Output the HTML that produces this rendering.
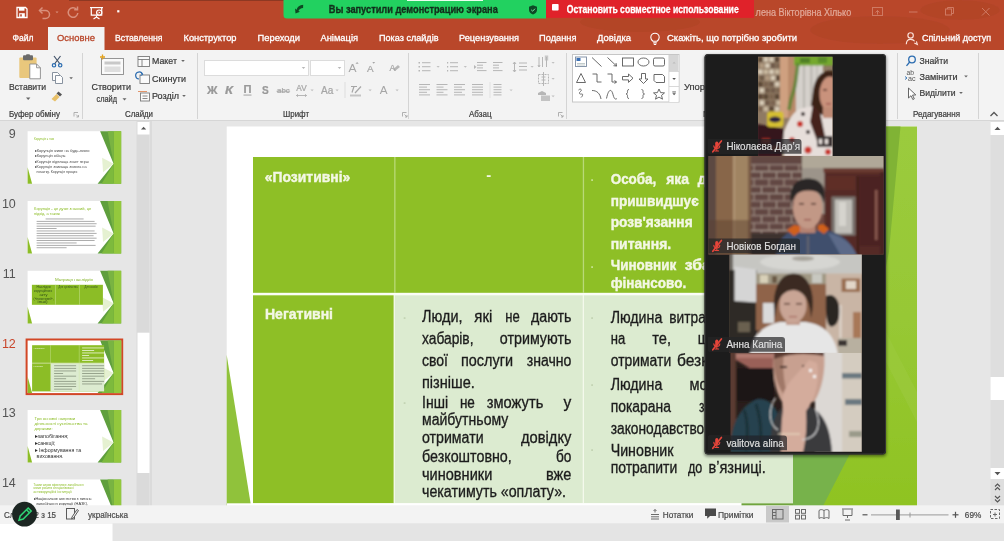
<!DOCTYPE html>
<html lang="uk"><head><meta charset="utf-8"><title>PowerPoint</title>
<style>
html,body{margin:0;padding:0;background:#e6e6e6;overflow:hidden}
svg{display:block;font-family:"Liberation Sans",sans-serif}
text{white-space:pre}
</style></head><body>
<svg width="1004" height="541" viewBox="0 0 1004 541">
<defs><filter id="soft" x="-2%" y="-2%" width="104%" height="104%"><feGaussianBlur stdDeviation="0.42"/></filter></defs>
<g filter="url(#soft)">
<rect x="-6" y="-6" width="1016" height="553" fill="#e6e6e6" />
<rect x="-6" y="-6" width="1016" height="56" fill="#b9472b" />
<g opacity="0.06" fill="#5a1a08"><ellipse cx="640" cy="22" rx="60" ry="10"/><ellipse cx="880" cy="30" rx="70" ry="14"/><ellipse cx="960" cy="10" rx="40" ry="10"/></g>
<rect x="69" y="0" width="215" height="0.9" fill="#8a3621" />
<rect x="-6" y="50" width="1016" height="70" fill="#f3f3f3" />
<rect x="-6" y="120" width="1016" height="1" fill="#d6d6d6" />
<rect x="48" y="27" width="56.5" height="24" fill="#f3f3f3" />
<g fill="none" stroke="#ffffff" stroke-width="1.3"><path d="M17 7.5h8.5l1.5 1.5v8.5h-10z"/></g>
<rect x="19" y="7.5" width="5.5" height="3.2" fill="#ffffff" />
<rect x="19.2" y="13.2" width="5.6" height="4.3" fill="#ffffff" />
<rect x="20.2" y="14.3" width="1.6" height="2.2" fill="#b9472b" />
<g fill="none" stroke="#d9907c" stroke-width="1.5"><path d="M40 10.5h5.5a4 4 0 0 1 0 8h-3"/><path d="M42.5 7.5l-3 3 3 3"/></g>
<path d="M55.5 11.5h3l-1.5 1.8z" fill="#d9907c" />
<g fill="none" stroke="#d9907c" stroke-width="1.5"><path d="M76.5 9.2a4.8 4.8 0 1 0 1.3 3.8"/><path d="M77.5 6.5v3.3h-3.3"/></g>
<g fill="none" stroke="#ffffff" stroke-width="1.2"><path d="M90 7.6h13"/><path d="M91.3 8v7.2h10.4V8"/><path d="M96.5 15.4v2M93.5 19l3-2 3 2"/><circle cx="99.2" cy="12.6" r="2.6" fill="#b9472b"/><path d="M98.6 11.4l1.8 1.2-1.8 1.2z" fill="#ffffff" stroke="none"/></g>
<rect x="117.2" y="10.2" width="2.2" height="2.2" fill="#ffffff" />
<path d="M116.5 14h3.6l-1.8 0z" fill="#ffffff" />
<path d="M283.5 -6H546V18.4H287a3.5 3.5 0 0 1-3.5-3.5z" fill="#23d160"/>
<rect x="407" y="0" width="76" height="1" fill="#e8fff0" />
<path d="M303.200 4.800c-3.600 .2-6 2.200-6.600 5l-1.600-1.200 .5 4.800 4.500-1.600-1.500-.9c.7-1.700 2.200-2.700 4.600-2.900z" fill="#0f4a24" />
<text x="328.8" y="12.9" font-size="10" fill="#12301c" textLength="169" lengthAdjust="spacingAndGlyphs" font-weight="bold" stroke="#12301c" stroke-width="0.35">Вы запустили демонстрацию экрана</text>
<path d="M533 5.300l4 1.500v3.300c0 2.200-1.700 3.600-4 4.400-2.300-.8-4-2.200-4-4.400v-3.300z" fill="#0e4a26" />
<path d="M531.200 9.800l1.400 1.400 2.400-2.500" fill="none" stroke="#7fe8a6" stroke-width="1" />
<rect x="546" y="-6" width="208" height="23.9" fill="#e0232a" />
<rect x="552" y="4" width="6.6" height="6.6" fill="#ffffff" rx="0.8"/>
<text x="566.7" y="12.9" font-size="10" fill="#ffffff" textLength="172" lengthAdjust="spacingAndGlyphs" font-weight="bold" stroke="#ffffff" stroke-width="0.3">Остановить совместное использование</text>
<text x="755.6" y="15.7" font-size="10" fill="#e2a999" textLength="95.6" lengthAdjust="spacingAndGlyphs" stroke="#e2a999" stroke-width="0.22" >лена Вікторівна Хілько</text>
<g fill="none" stroke="#cf7a63" stroke-width="1"><rect x="872.500" y="7.500" width="10" height="8"/><path d="M875.500 12.500l2-2 2 2M877.500 10.500v4"/><path d="M909 12h8.500"/><rect x="945.500" y="9" width="6" height="6"/><path d="M947.500 9V7.500h6v6H951.500"/><path d="M982 8l7.500 7.500M989.500 8L982 15.500"/></g>
<text x="12.5" y="41.3" font-size="9.4" fill="#ffffff" textLength="21" lengthAdjust="spacingAndGlyphs" stroke="#ffffff" stroke-width="0.3">Файл</text>
<text x="57" y="41.3" font-size="9.4" fill="#b9472b" textLength="38" lengthAdjust="spacingAndGlyphs" stroke="#b9472b" stroke-width="0.3">Основне</text>
<text x="115" y="41.3" font-size="9.4" fill="#ffffff" textLength="47.5" lengthAdjust="spacingAndGlyphs" stroke="#ffffff" stroke-width="0.3">Вставлення</text>
<text x="183.5" y="41.3" font-size="9.4" fill="#ffffff" textLength="53" lengthAdjust="spacingAndGlyphs" stroke="#ffffff" stroke-width="0.3">Конструктор</text>
<text x="257.5" y="41.3" font-size="9.4" fill="#ffffff" textLength="42.5" lengthAdjust="spacingAndGlyphs" stroke="#ffffff" stroke-width="0.3">Переходи</text>
<text x="320.5" y="41.3" font-size="9.4" fill="#ffffff" textLength="37.5" lengthAdjust="spacingAndGlyphs" stroke="#ffffff" stroke-width="0.3">Анімація</text>
<text x="379" y="41.3" font-size="9.4" fill="#ffffff" textLength="59.5" lengthAdjust="spacingAndGlyphs" stroke="#ffffff" stroke-width="0.3">Показ слайдів</text>
<text x="459" y="41.3" font-size="9.4" fill="#ffffff" textLength="60" lengthAdjust="spacingAndGlyphs" stroke="#ffffff" stroke-width="0.3">Рецензування</text>
<text x="539" y="41.3" font-size="9.4" fill="#ffffff" textLength="37.5" lengthAdjust="spacingAndGlyphs" stroke="#ffffff" stroke-width="0.3">Подання</text>
<text x="597" y="41.3" font-size="9.4" fill="#ffffff" textLength="34" lengthAdjust="spacingAndGlyphs" stroke="#ffffff" stroke-width="0.3">Довідка</text>
<text x="667" y="41.3" font-size="9.4" fill="#ffffff" textLength="130" lengthAdjust="spacingAndGlyphs" stroke="#ffffff" stroke-width="0.3">Скажіть, що потрібно зробити</text>
<text x="922" y="41.3" font-size="9.4" fill="#ffffff" textLength="69" lengthAdjust="spacingAndGlyphs" stroke="#ffffff" stroke-width="0.3">Спільний доступ</text>
<g fill="none" stroke="#ffffff" stroke-width="1.1"><path d="M653 41.200c-1.500-1.200-2.200-2.400-2.200-3.800a4.200 4.200 0 0 1 8.400 0c0 1.400-.7 2.600-2.200 3.800z"/><path d="M653.200 42.900h3.600M653.800 44.500h2.400"/></g>
<g fill="none" stroke="#fbe3da" stroke-width="1.15"><circle cx="910.600" cy="35.400" r="2.700"/><path d="M906.300 44.300c0-3.300 2-5 4.300-5s3.300 .9 4 2"/><path d="M914.300 43l3 1.400-.9-3"/></g>
<rect x="82" y="53" width="1" height="66" fill="#d4d4d4" />
<rect x="197" y="53" width="1" height="66" fill="#d4d4d4" />
<rect x="408" y="53" width="1" height="66" fill="#d4d4d4" />
<rect x="566" y="53" width="1" height="66" fill="#d4d4d4" />
<rect x="897" y="53" width="1" height="66" fill="#d4d4d4" />
<rect x="978" y="53" width="1" height="66" fill="#d4d4d4" />
<text x="9" y="117.4" font-size="9.2" fill="#3c3c3c" textLength="51" lengthAdjust="spacingAndGlyphs" stroke="#3c3c3c" stroke-width="0.22" >Буфер обміну</text>
<text x="125" y="117.4" font-size="9.2" fill="#3c3c3c" textLength="28" lengthAdjust="spacingAndGlyphs" stroke="#3c3c3c" stroke-width="0.22" >Слайди</text>
<text x="283" y="117.4" font-size="9.2" fill="#3c3c3c" textLength="26" lengthAdjust="spacingAndGlyphs" stroke="#3c3c3c" stroke-width="0.22" >Шрифт</text>
<text x="469" y="117.4" font-size="9.2" fill="#3c3c3c" textLength="22.5" lengthAdjust="spacingAndGlyphs" stroke="#3c3c3c" stroke-width="0.22" >Абзац</text>
<text x="913" y="117.4" font-size="9.2" fill="#3c3c3c" textLength="47" lengthAdjust="spacingAndGlyphs" stroke="#3c3c3c" stroke-width="0.22" >Редагування</text>
<text x="703" y="117.4" font-size="9.2" fill="#3c3c3c" stroke="#3c3c3c" stroke-width="0.22" >М</text>
<g fill="none" stroke="#a8a8a8" stroke-width="0.9"><path d="M74 112.5h-0 M74 116.500v-4h4"/><path d="M76 114.500l2.500 2.500M78.5 115v2h-2"/></g>
<g fill="none" stroke="#a8a8a8" stroke-width="0.9"><path d="M402.5 112.5h-0 M402.5 116.500v-4h4"/><path d="M404.5 114.500l2.500 2.500M407.0 115v2h-2"/></g>
<g fill="none" stroke="#a8a8a8" stroke-width="0.9"><path d="M558.5 112.5h-0 M558.5 116.500v-4h4"/><path d="M560.5 114.500l2.500 2.500M563.0 115v2h-2"/></g>
<g><rect x="19.300" y="57.500" width="17.300" height="20.500" rx="1" fill="#e9c77b"/><rect x="23" y="55.300" width="10" height="5" rx="1" fill="#6b6b6b"/><rect x="26" y="54.300" width="4" height="2.500" rx="1" fill="#6b6b6b"/><path d="M29.800 64h6.800l3.800 3.800v11h-10.600z" fill="#ffffff" stroke="#8a8a8a" stroke-width="0.9"/><path d="M36.600 64v3.800h3.800" fill="none" stroke="#8a8a8a" stroke-width="0.9"/></g>
<text x="9" y="89.9" font-size="9.8" fill="#3a3a3a" textLength="37" lengthAdjust="spacingAndGlyphs" stroke="#3a3a3a" stroke-width="0.22" >Вставити</text>
<path d="M26 97.500h4.400l-2.200 2.400z" fill="#666" />
<g fill="none" stroke="#44546a" stroke-width="1.2"><path d="M54 56l6 8M60.500 56l-6 8"/><circle cx="54" cy="65.300" r="1.700" stroke="#2b6cb0"/><circle cx="60.200" cy="65.300" r="1.700" stroke="#2b6cb0"/></g>
<g fill="#fdfdfd" stroke="#7a8694" stroke-width="0.9"><path d="M52.500 72.500h5l2 2v6h-7z"/><path d="M55.500 75.500h5l2 2v6h-7z"/></g>
<path d="M69.300 77.300h3.600l-1.800 2z" fill="#666" />
<g><path d="M58.500 91.500l3.500 3-2 2-3.500-3z" fill="#555"/><path d="M56.500 94l3 3-4.500 4.500-3.500-2.500z" fill="#e8c068"/></g>
<g><rect x="101.500" y="58.500" width="22" height="16" fill="#fafafa" stroke="#8a8a8a" stroke-width="0.9"/><rect x="104.500" y="61.500" width="16" height="3" fill="#c8c8c8"/><rect x="104.500" y="66.500" width="16" height="5.500" fill="#dedede"/><path d="M102.500 54.500v5M100 57h5" stroke="#e3a21a" stroke-width="1.300"/></g>
<text x="91.5" y="89.9" font-size="9.8" fill="#3a3a3a" textLength="39.5" lengthAdjust="spacingAndGlyphs" stroke="#3a3a3a" stroke-width="0.22" >Створити</text>
<text x="96.5" y="102.3" font-size="9.8" fill="#3a3a3a" textLength="20.5" lengthAdjust="spacingAndGlyphs" stroke="#3a3a3a" stroke-width="0.22" >слайд</text>
<path d="M122.500 98.300h4l-2 2.200z" fill="#666" />
<g fill="#fafafa" stroke="#7a7a7a" stroke-width="0.9"><rect x="138" y="56.500" width="11.500" height="10"/><path d="M138 59.500h11.500M142 59.500v7" fill="none"/></g>
<text x="152" y="63.9" font-size="9.8" fill="#3a3a3a" textLength="25" lengthAdjust="spacingAndGlyphs" stroke="#3a3a3a" stroke-width="0.22" >Макет</text>
<path d="M181.200 60h3.600l-1.800 2z" fill="#666" />
<g fill="#fafafa" stroke="#7a7a7a" stroke-width="0.9"><rect x="140" y="75" width="9.500" height="8.500"/></g><path d="M142.500 74.500a3.500 3.500 0 1 0-3.500 4.500" fill="none" stroke="#2b6cb0" stroke-width="1.200"/><path d="M141 72.500l1.800 2-2.300 1" fill="none" stroke="#2b6cb0" stroke-width="1"/>
<text x="152" y="81.9" font-size="9.8" fill="#3a3a3a" textLength="34" lengthAdjust="spacingAndGlyphs" stroke="#3a3a3a" stroke-width="0.22" >Скинути</text>
<g fill="#fafafa" stroke="#7a7a7a" stroke-width="0.9"><rect x="140.500" y="93" width="9" height="8"/><path d="M138 91.500h9" stroke="#e08a5a"/><path d="M142.500 96h5M142.500 98.500h5" fill="none"/></g>
<text x="152" y="98.9" font-size="9.8" fill="#3a3a3a" textLength="27" lengthAdjust="spacingAndGlyphs" stroke="#3a3a3a" stroke-width="0.22" >Розділ</text>
<path d="M182.200 95h3.600l-1.800 2z" fill="#666" />
<rect x="204.500" y="60.500" width="104" height="15" fill="#fff" stroke="#dcdcdc" stroke-width="1"/><rect x="310.500" y="60.500" width="34" height="15" fill="#fff" stroke="#dcdcdc" stroke-width="1"/>
<path d="M301.700 67h3.600l-1.800 2z" fill="#b8b8b8" />
<path d="M337.700 67h3.600l-1.800 2z" fill="#b8b8b8" />
<text x="348.5" y="71.6" font-size="10.8" fill="#a6a6a6" textLength="8" lengthAdjust="spacingAndGlyphs" >A</text>
<path d="M355.500 63.800l1.600-1.900 1.600 1.900z" fill="#a6a6a6" />
<text x="367" y="71.6" font-size="9.5" fill="#a6a6a6" textLength="6.6" lengthAdjust="spacingAndGlyphs" stroke="#a6a6a6" stroke-width="0.22" >A</text>
<path d="M372.300 62l1.400 1.700 1.400-1.700z" fill="#a6a6a6" />
<text x="389.5" y="70.5" font-size="9.5" fill="#a6a6a6" textLength="6" lengthAdjust="spacingAndGlyphs" stroke="#a6a6a6" stroke-width="0.22" >A</text>
<path d="M393 69.500l5-4.500 2 2-5 4z" fill="#a6a6a6" opacity="0.8"/>
<text x="207" y="93.8" font-size="10.5" fill="#999" textLength="10.5" lengthAdjust="spacingAndGlyphs" font-weight="bold" stroke="#999" stroke-width="0.22" >Ж</text>
<text x="225" y="93.8" font-size="10.5" fill="#999" textLength="8" lengthAdjust="spacingAndGlyphs" font-weight="bold" stroke="#999" stroke-width="0.22" font-style="italic">К</text>
<text x="243.5" y="93.3" font-size="10.5" fill="#999" textLength="8" lengthAdjust="spacingAndGlyphs" font-weight="bold" stroke="#999" stroke-width="0.22" >П</text>
<rect x="243.5" y="94.6" width="8" height="0.9" fill="#999" />
<text x="262" y="93.8" font-size="10.5" fill="#999" textLength="6.7" lengthAdjust="spacingAndGlyphs" font-weight="bold" stroke="#999" stroke-width="0.22" >S</text>
<text x="277" y="93.4" font-size="8" fill="#a6a6a6" textLength="12.7" lengthAdjust="spacingAndGlyphs" stroke="#a6a6a6" stroke-width="0.22" >abc</text>
<rect x="276.5" y="90.8" width="13.6" height="0.8" fill="#a6a6a6" />
<text x="296.3" y="91.3" font-size="8.5" fill="#a6a6a6" textLength="10.4" lengthAdjust="spacingAndGlyphs" stroke="#a6a6a6" stroke-width="0.22" >AV</text>
<path d="M296.500 95.500h10M296.500 95.500l1.500-1.200M296.500 95.500l1.500 1.200M306.500 95.500l-1.500-1.200M306.500 95.500l-1.500 1.200" stroke="#a6a6a6" stroke-width="0.8" fill="none"/>
<path d="M310.500 89.500h3.200l-1.600 1.800z" fill="#c0c0c0" />
<text x="321" y="93.8" font-size="10" fill="#a6a6a6" textLength="12.3" lengthAdjust="spacingAndGlyphs" stroke="#a6a6a6" stroke-width="0.22" >Aa</text>
<path d="M335.500 89.500h3.200l-1.600 1.800z" fill="#c0c0c0" />
<rect x="344.5" y="82" width="1" height="16" fill="#dedede" />
<g stroke="#a6a6a6" stroke-width="1.200" fill="none"><path d="M351 86.500h6M354 86.500l-2 6"/><path d="M355 93l6-6.500"/><path d="M350 95.500h11" stroke-width="2" stroke="#c4c4c4"/></g>
<path d="M368.500 89.500h3.200l-1.600 1.800z" fill="#c0c0c0" />
<text x="379.7" y="93.8" font-size="10.8" fill="#a6a6a6" textLength="7.8" lengthAdjust="spacingAndGlyphs" >A</text>
<path d="M395.500 89.500h3.200l-1.600 1.800z" fill="#c0c0c0" />
<rect x="418.5" y="62" width="1.5" height="1.5" fill="#b6b6b6" />
<rect x="422" y="62.2" width="8.5" height="1" fill="#b6b6b6" />
<rect x="418.5" y="66" width="1.5" height="1.5" fill="#b6b6b6" />
<rect x="422" y="66.2" width="8.5" height="1" fill="#b6b6b6" />
<rect x="418.5" y="70" width="1.5" height="1.5" fill="#b6b6b6" />
<rect x="422" y="70.2" width="8.5" height="1" fill="#b6b6b6" />
<path d="M436.500 66h3.200l-1.600 1.800z" fill="#c0c0c0" />
<rect x="447" y="62" width="1.2" height="1.5" fill="#b6b6b6" />
<rect x="450" y="62.2" width="8" height="1" fill="#b6b6b6" />
<rect x="447" y="66" width="1.2" height="1.5" fill="#b6b6b6" />
<rect x="450" y="66.2" width="8" height="1" fill="#b6b6b6" />
<rect x="447" y="70" width="1.2" height="1.5" fill="#b6b6b6" />
<rect x="450" y="70.2" width="8" height="1" fill="#b6b6b6" />
<path d="M463.700 66h3.200l-1.600 1.800z" fill="#c0c0c0" />
<rect x="477" y="62.0" width="9.5" height="1" fill="#b6b6b6" />
<rect x="477" y="64.7" width="6" height="1" fill="#b6b6b6" />
<rect x="477" y="67.4" width="6" height="1" fill="#b6b6b6" />
<rect x="477" y="70.1" width="9.5" height="1" fill="#b6b6b6" />
<path d="M474 65l2.500 2-2.500 2z" fill="#b6b6b6" />
<rect x="493" y="62.0" width="9.5" height="1" fill="#b6b6b6" />
<rect x="493" y="64.7" width="6" height="1" fill="#b6b6b6" />
<rect x="493" y="67.4" width="6" height="1" fill="#b6b6b6" />
<rect x="493" y="70.1" width="9.5" height="1" fill="#b6b6b6" />
<rect x="419" y="84.0" width="11" height="1" fill="#b6b6b6" />
<rect x="419" y="86.6" width="8" height="1" fill="#b6b6b6" />
<rect x="419" y="89.2" width="11" height="1" fill="#b6b6b6" />
<rect x="419" y="91.8" width="8" height="1" fill="#b6b6b6" />
<rect x="419" y="94.4" width="11" height="1" fill="#b6b6b6" />
<rect x="436.5" y="84.0" width="11" height="1" fill="#b6b6b6" />
<rect x="436.5" y="86.6" width="7" height="1" fill="#b6b6b6" />
<rect x="436.5" y="89.2" width="11" height="1" fill="#b6b6b6" />
<rect x="436.5" y="91.8" width="7" height="1" fill="#b6b6b6" />
<rect x="436.5" y="94.4" width="11" height="1" fill="#b6b6b6" />
<rect x="454" y="84.0" width="11" height="1" fill="#b6b6b6" />
<rect x="454" y="86.6" width="8" height="1" fill="#b6b6b6" />
<rect x="454" y="89.2" width="11" height="1" fill="#b6b6b6" />
<rect x="454" y="91.8" width="8" height="1" fill="#b6b6b6" />
<rect x="454" y="94.4" width="11" height="1" fill="#b6b6b6" />
<rect x="472" y="84.0" width="11" height="1" fill="#b6b6b6" />
<rect x="472" y="86.6" width="11" height="1" fill="#b6b6b6" />
<rect x="472" y="89.2" width="11" height="1" fill="#b6b6b6" />
<rect x="472" y="91.8" width="11" height="1" fill="#b6b6b6" />
<rect x="472" y="94.4" width="11" height="1" fill="#b6b6b6" />
<rect x="489.5" y="82" width="1" height="16" fill="#e2e2e2" />
<rect x="493.5" y="84.0" width="8" height="1" fill="#b6b6b6" />
<rect x="493.5" y="86.6" width="8" height="1" fill="#b6b6b6" />
<rect x="493.5" y="89.2" width="8" height="1" fill="#b6b6b6" />
<rect x="493.5" y="91.8" width="8" height="1" fill="#b6b6b6" />
<rect x="493.5" y="94.4" width="8" height="1" fill="#b6b6b6" />
<path d="M509.500 89.500h3.200l-1.600 1.800z" fill="#c8c8c8" />
<g stroke="#b6b6b6" stroke-width="1" fill="none"><path d="M514.500 62v10M513 64l1.500-2 1.500 2M513 70l1.500 2 1.500-2"/><path d="M519 63h8M519 66.500h8M519 70h8"/></g>
<path d="M530.500 66h3.200l-1.600 1.800z" fill="#c0c0c0" />
<g stroke="#b6b6b6" stroke-width="1" fill="none"><path d="M539 57v10M542.500 57v10M546.500 57v10M538 65l1 2 1-2"/><rect x="544.800" y="55.500" width="3.400" height="5" fill="#b6b6b6" stroke="none" opacity="0.700"/></g>
<path d="M551.500 62h3.200l-1.600 1.800z" fill="#c0c0c0" />
<g stroke="#b6b6b6" stroke-width="1" fill="none"><rect x="538.500" y="74.500" width="10" height="9" stroke-dasharray="2 1"/><path d="M543.500 72v14M541.500 77h4M541.500 80h4"/></g>
<path d="M551.500 78h3.200l-1.600 1.800z" fill="#c0c0c0" />
<g fill="#b6b6b6"><path d="M538 93l4-2 4 2v2h-8z"/><rect x="541" y="95.500" width="9" height="5.500" opacity="0.800"/></g>
<path d="M551.500 95.500h3.200l-1.600 1.800z" fill="#c0c0c0" />
<rect x="572.500" y="54.500" width="106.500" height="47.500" fill="#ffffff" stroke="#c6c6c6" stroke-width="1"/>
<rect x="669" y="55" width="9.5" height="47" fill="#ffffff" />
<rect x="669" y="55" width="9.5" height="16" fill="#d6d6d6" />
<rect x="668.5" y="55" width="0.8" height="47" fill="#d0d0d0" />
<rect x="669" y="71" width="10" height="0.8" fill="#d0d0d0" />
<rect x="669" y="86" width="10" height="0.8" fill="#d0d0d0" />
<path d="M672.500 63.500l1.600-1.800 1.600 1.800z" fill="#bcbcbc" />
<path d="M672.300 78l1.800 2 1.800-2z" fill="#555" />
<path d="M672.300 93.300l1.800 2 1.800-2z" fill="#555" />
<rect x="672.3" y="91.5" width="3.6" height="0.9" fill="#555" />
<g fill="none" stroke="#5a5a5a" stroke-width="0.900"><rect x="575.500" y="57" width="11" height="9.500" stroke="#7a8aa0"/><rect x="576.500" y="58" width="4" height="3" fill="#3b6fb5" stroke="none"/><path d="M577 63.500h8M577 65h8" stroke="#9aa" stroke-width="0.6"/><path d="M592 57.500l9.500 9"/><path d="M607.500 57.500l9 8.500M616.500 66l-.5-3M616.500 66l-3-.3"/><rect x="622.500" y="58" width="11" height="8"/><ellipse cx="643.500" cy="62" rx="5.500" ry="4"/><rect x="653.500" y="58" width="11" height="8" rx="1.500"/><path d="M581 73.500l4.500 9h-9z"/><path d="M592.500 74h4.500v8h4.500"/><path d="M607.500 74h4.500v8h4.500M616.500 82l-2-1.500M616.500 82l-2 1.500"/><path d="M622.500 76.500h6v-2.500l4.500 4.200-4.500 4.200v-2.500h-6z"/><path d="M641.500 73.500h4v5.500h2.500l-4.500 4.500-4.500-4.500h2.500z"/><path d="M654 74.500h8.500l2 2v6h-8.500l-2-2z"/><path d="M578.500 90c2-2 4 0 2 1.500s-1 3 1 2.500 1 2.500-.5 3.500"/><path d="M592 90.500c5 0 8 3 9 8.500"/><path d="M606.500 98.500c2-10 5-10 6.500-4s3 4.500 4 4"/><path d="M629 89.500c-2 0-1.500 2-1.500 3s-1 1.500-1.500 1.500c.5 0 1.500.5 1.500 1.500s-.5 3 1.500 3"/><path d="M641.500 89.500c2 0 1.500 2 1.500 3s1 1.500 1.500 1.500c-.5 0-1.500.5-1.500 1.500s.5 3-1.500 3"/><path d="M659 89l1.600 3.600 3.900.3-3 2.500 1 3.800-3.500-2.100-3.500 2.100 1-3.800-3-2.500 3.900-.3z"/></g>
<text x="684" y="89.9" font-size="9.8" fill="#3a3a3a" textLength="21" lengthAdjust="spacingAndGlyphs" stroke="#3a3a3a" stroke-width="0.22" >Упор</text>
<g fill="none" stroke="#2b6cb0" stroke-width="1.300"><circle cx="912" cy="59.500" r="3.300"/><path d="M909.700 62l-3.200 3.800"/></g>
<text x="919.5" y="63.9" font-size="9.8" fill="#3a3a3a" textLength="28.5" lengthAdjust="spacingAndGlyphs" stroke="#3a3a3a" stroke-width="0.22" >Знайти</text>
<text x="906.5" y="74.5" font-size="7.5" fill="#555" textLength="7.5" lengthAdjust="spacingAndGlyphs" >ab</text>
<text x="908" y="80.5" font-size="7.5" fill="#555" textLength="7.5" lengthAdjust="spacingAndGlyphs" >ac</text>
<path d="M905 76.500l2 1.500-2 1.500" fill="none" stroke="#2b6cb0" stroke-width="0.900"/>
<text x="919.5" y="79.5" font-size="9.8" fill="#3a3a3a" textLength="38" lengthAdjust="spacingAndGlyphs" stroke="#3a3a3a" stroke-width="0.22" >Замінити</text>
<path d="M964.200 75.500h3.600l-1.800 2z" fill="#666" />
<path d="M908.500 88v10l2.500-2.300 1.800 3.800 1.500-.7-1.800-3.700 3.300-.2z" fill="#fff" stroke="#555" stroke-width="0.900"/>
<text x="919.5" y="96.0" font-size="9.8" fill="#3a3a3a" textLength="36" lengthAdjust="spacingAndGlyphs" stroke="#3a3a3a" stroke-width="0.22" >Виділити</text>
<path d="M959.200 92h3.600l-1.800 2z" fill="#666" />
<path d="M990.500 116l3.500-3.500 3.500 3.500" fill="none" stroke="#555" stroke-width="1.300"/>
<rect x="226.7" y="126.5" width="690.3" height="380" fill="#ffffff" />
<defs><linearGradient id="gs" x1="0" y1="0" x2="0" y2="1"><stop offset="0" stop-color="#9bcb3d"/><stop offset="0.5" stop-color="#97c835"/><stop offset="1" stop-color="#8fc322"/></linearGradient></defs>
<rect x="793" y="126.500" width="124" height="380" fill="url(#gs)"/>
<path d="M885 126.500h15.500l-11.500 125-4 20z" fill="#80b336" />
<path d="M885 330l32 62v30l-32-62z" fill="#9ccb40" opacity="0.55"/>
<path d="M793 440h64l-34 66h-30z" fill="#77b24b" />
<path d="M226.700 355L251 506H226.700z" fill="#90c23a" />
<rect x="253" y="157" width="540" height="137" fill="#8ebf27" />
<rect x="253" y="294.8" width="141" height="208.5" fill="#8ebf27" />
<rect x="394" y="294.8" width="399" height="208.5" fill="#dcebd0" />
<rect x="253" y="292.8" width="540" height="2.5" fill="#fbfdf6" />
<rect x="394.2" y="157" width="1.3" height="136" fill="#b9d977" />
<rect x="582.8" y="157" width="1.3" height="136" fill="#b9d977" />
<rect x="393.6" y="295" width="1.3" height="208" fill="#f4f9ec" />
<rect x="582.7" y="295" width="1.3" height="208" fill="#f4f9ec" />
<rect x="227" y="503.3" width="566" height="3" fill="#ffffff" />
<rect x="741.5" y="503.3" width="51.5" height="3" fill="#6fa43e" />
<text x="264.8" y="182" font-size="13.9" fill="#f3f7e4" textLength="85.5" lengthAdjust="spacingAndGlyphs" font-weight="bold" stroke="#f3f7e4" stroke-width="0.4">«Позитивні»</text>
<text x="486.3" y="180.3" font-size="15" fill="#f3f7e4" textLength="5" lengthAdjust="spacingAndGlyphs" font-weight="bold" >-</text>
<text x="265" y="319.2" font-size="13.9" fill="#f3f7e4" textLength="68" lengthAdjust="spacingAndGlyphs" font-weight="bold" stroke="#f3f7e4" stroke-width="0.4">Негативні</text>
<rect x="591.2" y="179.2" width="1.8" height="1.8" fill="#c4e08c" />
<rect x="591.2" y="266.2" width="1.8" height="1.8" fill="#c4e08c" />
<rect x="403.7" y="317.2" width="1.8" height="1.8" fill="#c4d4b4" />
<rect x="403.7" y="402.2" width="1.8" height="1.8" fill="#c4d4b4" />
<rect x="591.2" y="317.2" width="1.8" height="1.8" fill="#c4d4b4" />
<rect x="591.2" y="384.2" width="1.8" height="1.8" fill="#c4d4b4" />
<rect x="591.2" y="449.2" width="1.8" height="1.8" fill="#c4d4b4" />
<text x="610.7" y="184" font-size="13.9" fill="#f3f7e4" textLength="45.6" lengthAdjust="spacingAndGlyphs" font-weight="bold" stroke="#f3f7e4" stroke-width="0.4">Особа,</text>
<text x="666.2" y="184" font-size="13.9" fill="#f3f7e4" textLength="22.8" lengthAdjust="spacingAndGlyphs" font-weight="bold" stroke="#f3f7e4" stroke-width="0.4">яка</text>
<text x="697.8" y="184" font-size="13.9" fill="#f3f7e4" textLength="9" lengthAdjust="spacingAndGlyphs" font-weight="bold" stroke="#f3f7e4" stroke-width="0.4">д</text>
<text x="610.7" y="205.6" font-size="13.9" fill="#f3f7e4" textLength="88" lengthAdjust="spacingAndGlyphs" font-weight="bold" stroke="#f3f7e4" stroke-width="0.4">пришвидшує</text>
<text x="610.7" y="227.4" font-size="13.9" fill="#f3f7e4" textLength="82" lengthAdjust="spacingAndGlyphs" font-weight="bold" stroke="#f3f7e4" stroke-width="0.4">розв'язання</text>
<text x="610.7" y="249.2" font-size="13.9" fill="#f3f7e4" textLength="60.5" lengthAdjust="spacingAndGlyphs" font-weight="bold" stroke="#f3f7e4" stroke-width="0.4">питання.</text>
<text x="610.7" y="270.4" font-size="13.9" fill="#f3f7e4" textLength="65.5" lengthAdjust="spacingAndGlyphs" font-weight="bold" stroke="#f3f7e4" stroke-width="0.4">Чиновник</text>
<text x="684.7" y="270.4" font-size="13.9" fill="#f3f7e4" textLength="26" lengthAdjust="spacingAndGlyphs" font-weight="bold" stroke="#f3f7e4" stroke-width="0.4">зба</text>
<text x="610.7" y="288.2" font-size="13.9" fill="#f3f7e4" textLength="75.5" lengthAdjust="spacingAndGlyphs" font-weight="bold" stroke="#f3f7e4" stroke-width="0.4">фінансово.</text>
<text x="422" y="322.4" font-size="15.6" fill="#1c1c1c" textLength="40.5" lengthAdjust="spacingAndGlyphs" stroke="#1c1c1c" stroke-width="0.32">Люди,</text>
<text x="474.3" y="322.4" font-size="15.6" fill="#1c1c1c" textLength="18" lengthAdjust="spacingAndGlyphs" stroke="#1c1c1c" stroke-width="0.32">які</text>
<text x="505.3" y="322.4" font-size="15.6" fill="#1c1c1c" textLength="14.5" lengthAdjust="spacingAndGlyphs" stroke="#1c1c1c" stroke-width="0.32">не</text>
<text x="531" y="322.4" font-size="15.6" fill="#1c1c1c" textLength="40.5" lengthAdjust="spacingAndGlyphs" stroke="#1c1c1c" stroke-width="0.32">дають</text>
<text x="422" y="344.2" font-size="15.6" fill="#1c1c1c" textLength="51.5" lengthAdjust="spacingAndGlyphs" stroke="#1c1c1c" stroke-width="0.32">хабарів,</text>
<text x="499.8" y="344.2" font-size="15.6" fill="#1c1c1c" textLength="71.6" lengthAdjust="spacingAndGlyphs" stroke="#1c1c1c" stroke-width="0.32">отримують</text>
<text x="422" y="366" font-size="15.6" fill="#1c1c1c" textLength="26" lengthAdjust="spacingAndGlyphs" stroke="#1c1c1c" stroke-width="0.32">свої</text>
<text x="461" y="366" font-size="15.6" fill="#1c1c1c" textLength="52" lengthAdjust="spacingAndGlyphs" stroke="#1c1c1c" stroke-width="0.32">послуги</text>
<text x="526.7" y="366" font-size="15.6" fill="#1c1c1c" textLength="44.7" lengthAdjust="spacingAndGlyphs" stroke="#1c1c1c" stroke-width="0.32">значно</text>
<text x="422" y="387.8" font-size="15.6" fill="#1c1c1c" textLength="52.8" lengthAdjust="spacingAndGlyphs" stroke="#1c1c1c" stroke-width="0.32">пізніше.</text>
<text x="422" y="407.7" font-size="15.6" fill="#1c1c1c" textLength="26" lengthAdjust="spacingAndGlyphs" stroke="#1c1c1c" stroke-width="0.32">Інші</text>
<text x="459.9" y="407.7" font-size="15.6" fill="#1c1c1c" textLength="15" lengthAdjust="spacingAndGlyphs" stroke="#1c1c1c" stroke-width="0.32">не</text>
<text x="486.8" y="407.7" font-size="15.6" fill="#1c1c1c" textLength="56.5" lengthAdjust="spacingAndGlyphs" stroke="#1c1c1c" stroke-width="0.32">зможуть</text>
<text x="563.5" y="407.7" font-size="15.6" fill="#1c1c1c" textLength="7.8" lengthAdjust="spacingAndGlyphs" stroke="#1c1c1c" stroke-width="0.32">у</text>
<text x="422" y="425" font-size="15.6" fill="#1c1c1c" textLength="86.3" lengthAdjust="spacingAndGlyphs" stroke="#1c1c1c" stroke-width="0.32">майбутньому</text>
<text x="422" y="443.1" font-size="15.6" fill="#1c1c1c" textLength="61.6" lengthAdjust="spacingAndGlyphs" stroke="#1c1c1c" stroke-width="0.32">отримати</text>
<text x="521" y="443.1" font-size="15.6" fill="#1c1c1c" textLength="50.4" lengthAdjust="spacingAndGlyphs" stroke="#1c1c1c" stroke-width="0.32">довідку</text>
<text x="422" y="462" font-size="15.6" fill="#1c1c1c" textLength="89.8" lengthAdjust="spacingAndGlyphs" stroke="#1c1c1c" stroke-width="0.32">безкоштовно,</text>
<text x="556" y="462" font-size="15.6" fill="#1c1c1c" textLength="15.4" lengthAdjust="spacingAndGlyphs" stroke="#1c1c1c" stroke-width="0.32">бо</text>
<text x="422" y="480.1" font-size="15.6" fill="#1c1c1c" textLength="70.3" lengthAdjust="spacingAndGlyphs" stroke="#1c1c1c" stroke-width="0.32">чиновники</text>
<text x="546" y="480.1" font-size="15.6" fill="#1c1c1c" textLength="25.4" lengthAdjust="spacingAndGlyphs" stroke="#1c1c1c" stroke-width="0.32">вже</text>
<text x="422" y="496.8" font-size="15.6" fill="#1c1c1c" textLength="144" lengthAdjust="spacingAndGlyphs" stroke="#1c1c1c" stroke-width="0.32">чекатимуть «оплату».</text>
<text x="610.7" y="322.6" font-size="15.6" fill="#1c1c1c" textLength="51.6" lengthAdjust="spacingAndGlyphs" stroke="#1c1c1c" stroke-width="0.32">Людина</text>
<text x="669.3" y="322.6" font-size="15.6" fill="#1c1c1c" textLength="58" lengthAdjust="spacingAndGlyphs" stroke="#1c1c1c" stroke-width="0.32">витрачає</text>
<text x="610.7" y="343.6" font-size="15.6" fill="#1c1c1c" textLength="14.5" lengthAdjust="spacingAndGlyphs" stroke="#1c1c1c" stroke-width="0.32">на</text>
<text x="652.3" y="343.6" font-size="15.6" fill="#1c1c1c" textLength="18.7" lengthAdjust="spacingAndGlyphs" stroke="#1c1c1c" stroke-width="0.32">те,</text>
<text x="697.7" y="343.6" font-size="15.6" fill="#1c1c1c" textLength="27" lengthAdjust="spacingAndGlyphs" stroke="#1c1c1c" stroke-width="0.32">щоб</text>
<text x="610.7" y="366.1" font-size="15.6" fill="#1c1c1c" textLength="60.5" lengthAdjust="spacingAndGlyphs" stroke="#1c1c1c" stroke-width="0.32">отримати</text>
<text x="676.9" y="366.1" font-size="15.6" fill="#1c1c1c" textLength="40" lengthAdjust="spacingAndGlyphs" stroke="#1c1c1c" stroke-width="0.32">безко</text>
<text x="610.7" y="389.8" font-size="15.6" fill="#1c1c1c" textLength="51.6" lengthAdjust="spacingAndGlyphs" stroke="#1c1c1c" stroke-width="0.32">Людина</text>
<text x="689.4" y="389.8" font-size="15.6" fill="#1c1c1c" textLength="36" lengthAdjust="spacingAndGlyphs" stroke="#1c1c1c" stroke-width="0.32">може</text>
<text x="610.7" y="411.8" font-size="15.6" fill="#1c1c1c" textLength="60.3" lengthAdjust="spacingAndGlyphs" stroke="#1c1c1c" stroke-width="0.32">покарана</text>
<text x="699" y="411.8" font-size="15.6" fill="#1c1c1c" textLength="12" lengthAdjust="spacingAndGlyphs" stroke="#1c1c1c" stroke-width="0.32">за</text>
<text x="610.7" y="433.7" font-size="15.6" fill="#1c1c1c" textLength="103" lengthAdjust="spacingAndGlyphs" stroke="#1c1c1c" stroke-width="0.32">законодавством</text>
<text x="610.7" y="455.5" font-size="15.6" fill="#1c1c1c" textLength="62.8" lengthAdjust="spacingAndGlyphs" stroke="#1c1c1c" stroke-width="0.32">Чиновник</text>
<text x="610.7" y="473" font-size="15.6" fill="#1c1c1c" textLength="66.5" lengthAdjust="spacingAndGlyphs" stroke="#1c1c1c" stroke-width="0.32">потрапити</text>
<text x="688" y="473" font-size="15.6" fill="#1c1c1c" textLength="14.3" lengthAdjust="spacingAndGlyphs" stroke="#1c1c1c" stroke-width="0.32">до</text>
<text x="708.5" y="473" font-size="15.6" fill="#1c1c1c" textLength="57.3" lengthAdjust="spacingAndGlyphs" stroke="#1c1c1c" stroke-width="0.32">в’язниці.</text>
<rect x="990.5" y="121" width="20" height="385" fill="#dedede" />
<rect x="990.5" y="122" width="20" height="13" fill="#ffffff" />
<path d="M994.500 130l3-3.200 3 3.200z" fill="#555" />
<rect x="990.5" y="377" width="20" height="23" fill="#ffffff" />
<rect x="990.5" y="468" width="20" height="11" fill="#ffffff" />
<path d="M994.500 472l3 3.200 3-3.200z" fill="#555" />
<g fill="none" stroke="#555" stroke-width="1.100"><path d="M995 486.500l2.500-2.500 2.500 2.500M995 490l2.500-2.500 2.500 2.500"/><path d="M995 496l2.500 2.500 2.500-2.500M995 499.500l2.500 2.500 2.500-2.500"/></g>
<rect x="136.5" y="121" width="13" height="385" fill="#dadada" />
<rect x="137.5" y="122" width="12" height="12.5" fill="#ffffff" />
<path d="M141 129.500l2.600-2.800 2.600 2.800z" fill="#555" />
<rect x="137.5" y="332.7" width="12" height="140.3" fill="#ffffff" />
<rect x="150.5" y="121" width="1" height="385" fill="#cfcfcf" />
<text x="15.8" y="138.39999999999998" font-size="12.5" fill="#555555" text-anchor="end" >9</text>
<rect x="27.6" y="131.2" width="93.6" height="52.6" fill="#ffffff" />
<g transform="translate(27.6,131.2)">
<path d="M72.500 0H93.600V52.600H70L86 32.500z" fill="#5f9f3e"/>
<path d="M86 0h7.600v52.600h-7.600z" fill="#93c83d"/>
<path d="M80 0h6v32.500z" fill="#79b443"/>
<path d="M86 32.500L74 52.600h12z" fill="#7dba3c"/>
<path d="M74.500 26.500l11.500 6-10.500 8.500z" fill="#e2f0cc" opacity="0.900"/>
<path d="M0 36L4.500 52.600H0z" fill="#8cbd26"/>
</g>
<text x="34.1" y="140.2" font-size="3.6" fill="#8cbd26" textLength="20" lengthAdjust="spacingAndGlyphs" >Корупція є там</text>
<text x="34.6" y="151.7" font-size="3.8" fill="#4a4a4a" textLength="55" lengthAdjust="spacingAndGlyphs" >▸Корупція живе на будь-якого</text>
<text x="34.6" y="157.1" font-size="3.8" fill="#4a4a4a" textLength="31" lengthAdjust="spacingAndGlyphs" >▸Корупція обіцяє</text>
<text x="34.6" y="162.5" font-size="3.8" fill="#4a4a4a" textLength="54" lengthAdjust="spacingAndGlyphs" >▸Корупція відплаща знает перш</text>
<text x="34.6" y="167.89999999999998" font-size="3.8" fill="#4a4a4a" textLength="52" lengthAdjust="spacingAndGlyphs" >▸Корупція зникаща зникла на</text>
<text x="36.6" y="173.29999999999998" font-size="3.8" fill="#4a4a4a" textLength="41" lengthAdjust="spacingAndGlyphs" >початку. Корупція процес</text>
<text x="15.8" y="208.2" font-size="12.5" fill="#555555" text-anchor="end" >10</text>
<rect x="27.6" y="201" width="93.6" height="52.6" fill="#ffffff" />
<g transform="translate(27.6,201)">
<path d="M72.500 0H93.600V52.600H70L86 32.500z" fill="#5f9f3e"/>
<path d="M86 0h7.600v52.600h-7.600z" fill="#93c83d"/>
<path d="M80 0h6v32.500z" fill="#79b443"/>
<path d="M86 32.500L74 52.600h12z" fill="#7dba3c"/>
<path d="M74.500 26.500l11.500 6-10.500 8.500z" fill="#e2f0cc" opacity="0.900"/>
<path d="M0 36L4.500 52.600H0z" fill="#8cbd26"/>
</g>
<text x="34.1" y="210" font-size="3.6" fill="#8cbd26" textLength="57" lengthAdjust="spacingAndGlyphs" >Корупція - це дуже значний, це</text>
<text x="34.1" y="214.5" font-size="3.6" fill="#8cbd26" textLength="26" lengthAdjust="spacingAndGlyphs" >підхід, а також</text>
<rect x="45.6" y="218.5" width="38" height="0.9" fill="#a4a4a4" />
<rect x="36.6" y="220.9" width="58" height="0.9" fill="#a4a4a4" />
<rect x="36.6" y="223.3" width="60" height="0.9" fill="#a4a4a4" />
<rect x="36.6" y="225.7" width="59" height="0.9" fill="#a4a4a4" />
<rect x="36.6" y="228.1" width="20" height="0.9" fill="#a4a4a4" />
<rect x="36.6" y="230.5" width="58" height="0.9" fill="#a4a4a4" />
<rect x="36.6" y="232.9" width="60" height="0.9" fill="#a4a4a4" />
<rect x="36.6" y="235.3" width="57" height="0.9" fill="#a4a4a4" />
<rect x="36.6" y="237.7" width="60" height="0.9" fill="#a4a4a4" />
<rect x="36.6" y="240.1" width="58" height="0.9" fill="#a4a4a4" />
<rect x="36.6" y="242.5" width="40" height="0.9" fill="#a4a4a4" />
<rect x="36.6" y="244.9" width="59" height="0.9" fill="#a4a4a4" />
<rect x="36.6" y="247.3" width="30" height="0.9" fill="#a4a4a4" />
<text x="15.8" y="278.0" font-size="12.5" fill="#555555" text-anchor="end" >11</text>
<rect x="27.6" y="270.8" width="93.6" height="52.6" fill="#ffffff" />
<g transform="translate(27.6,270.8)">
<path d="M72.500 0H93.600V52.600H70L86 32.500z" fill="#5f9f3e"/>
<path d="M86 0h7.600v52.600h-7.600z" fill="#93c83d"/>
<path d="M80 0h6v32.500z" fill="#79b443"/>
<path d="M86 32.500L74 52.600h12z" fill="#7dba3c"/>
<path d="M74.500 26.500l11.500 6-10.500 8.500z" fill="#e2f0cc" opacity="0.900"/>
<path d="M0 36L4.500 52.600H0z" fill="#8cbd26"/>
</g>
<text x="54.900000000000006" y="280.5" font-size="3.8" fill="#86b52a" textLength="38" lengthAdjust="spacingAndGlyphs" >Матриця наслідків</text>
<rect x="31.900000000000002" y="284.8" width="71" height="20" fill="#8cbd26" />
<rect x="55.1" y="284.8" width="0.5" height="20" fill="#c8e090" />
<rect x="79.1" y="284.8" width="0.5" height="20" fill="#c8e090" />
<text x="36.6" y="288.3" font-size="2.8" fill="#33501a" textLength="14" lengthAdjust="spacingAndGlyphs" >Наслідки</text>
<text x="58.6" y="288.3" font-size="2.8" fill="#33501a" textLength="19" lengthAdjust="spacingAndGlyphs" >Для суспільства</text>
<text x="84.6" y="288.3" font-size="2.8" fill="#33501a" textLength="13" lengthAdjust="spacingAndGlyphs" >Для особи</text>
<text x="34.1" y="292.1" font-size="2.8" fill="#33501a" textLength="18" lengthAdjust="spacingAndGlyphs" >корупційного</text>
<text x="39.6" y="295.8" font-size="2.8" fill="#33501a" textLength="8" lengthAdjust="spacingAndGlyphs" >акту</text>
<text x="33.6" y="299.5" font-size="2.8" fill="#33501a" textLength="20" lengthAdjust="spacingAndGlyphs" >(«позитивні»,</text>
<text x="37.6" y="303.2" font-size="2.8" fill="#33501a" textLength="10" lengthAdjust="spacingAndGlyphs" >інші)</text>
<text x="15.8" y="347.7" font-size="12.5" fill="#c8452a" text-anchor="end" >12</text>
<rect x="25.6" y="338.5" width="97.6" height="56.6" fill="#d24726" />
<rect x="27.6" y="340.5" width="93.6" height="52.6" fill="#ffffff" />
<g transform="translate(27.6,340.5)">
<path d="M72.500 0H93.600V52.600H70L86 32.500z" fill="#5f9f3e"/>
<path d="M86 0h7.600v52.600h-7.600z" fill="#93c83d"/>
<path d="M80 0h6v32.500z" fill="#79b443"/>
<path d="M86 32.500L74 52.600h12z" fill="#7dba3c"/>
<path d="M74.500 26.500l11.500 6-10.500 8.500z" fill="#e2f0cc" opacity="0.900"/>
<path d="M0 36L4.500 52.600H0z" fill="#8cbd26"/>
</g>
<rect x="32.1" y="345.2" width="72" height="46.2" fill="#8cbd26" />
<rect x="50.7" y="363.3" width="53.4" height="28.1" fill="#dcebd0" />
<rect x="32.1" y="362.8" width="72" height="0.6" fill="#f0f6e0" />
<rect x="50.5" y="345.2" width="0.4" height="46.2" fill="#cfe6a0" />
<rect x="78.9" y="345.2" width="0.4" height="46.2" fill="#cfe6a0" />
<text x="33.6" y="349.2" font-size="2.3" fill="#eef6da" textLength="11.5" lengthAdjust="spacingAndGlyphs" >«Позитивні»</text>
<text x="33.6" y="367.0" font-size="2.3" fill="#eef6da" textLength="9.5" lengthAdjust="spacingAndGlyphs" >Негативні</text>
<rect x="82.1" y="347.5" width="22" height="0.9" fill="#e4f0c8" />
<rect x="82.1" y="350.0" width="12" height="0.9" fill="#e4f0c8" />
<rect x="82.1" y="352.5" width="22" height="0.9" fill="#e4f0c8" />
<rect x="82.1" y="355.0" width="7" height="0.9" fill="#e4f0c8" />
<rect x="82.1" y="357.5" width="22" height="0.9" fill="#e4f0c8" />
<rect x="82.1" y="360.0" width="11" height="0.9" fill="#e4f0c8" />
<rect x="54.1" y="365.3" width="22" height="0.9" fill="#8f9c86" />
<rect x="54.1" y="367.90000000000003" width="22" height="0.9" fill="#8f9c86" />
<rect x="54.1" y="370.5" width="22" height="0.9" fill="#8f9c86" />
<rect x="54.1" y="373.1" width="9" height="0.9" fill="#8f9c86" />
<rect x="54.1" y="375.7" width="22" height="0.9" fill="#8f9c86" />
<rect x="54.1" y="378.3" width="12" height="0.9" fill="#8f9c86" />
<rect x="54.1" y="380.90000000000003" width="22" height="0.9" fill="#8f9c86" />
<rect x="54.1" y="383.5" width="22" height="0.9" fill="#8f9c86" />
<rect x="54.1" y="386.1" width="22" height="0.9" fill="#8f9c86" />
<rect x="54.1" y="388.7" width="18" height="0.9" fill="#8f9c86" />
<rect x="82.1" y="365.3" width="22" height="0.9" fill="#8f9c86" />
<rect x="82.1" y="367.90000000000003" width="22" height="0.9" fill="#8f9c86" />
<rect x="82.1" y="370.5" width="22" height="0.9" fill="#8f9c86" />
<rect x="82.1" y="373.1" width="22" height="0.9" fill="#8f9c86" />
<rect x="82.1" y="375.7" width="22" height="0.9" fill="#8f9c86" />
<rect x="82.1" y="378.3" width="13" height="0.9" fill="#8f9c86" />
<rect x="82.1" y="380.90000000000003" width="22" height="0.9" fill="#8f9c86" />
<rect x="82.1" y="383.5" width="20" height="0.9" fill="#8f9c86" />
<text x="15.8" y="417.2" font-size="12.5" fill="#555555" text-anchor="end" >13</text>
<rect x="27.6" y="410" width="93.6" height="52.6" fill="#ffffff" />
<g transform="translate(27.6,410)">
<path d="M72.500 0H93.600V52.600H70L86 32.500z" fill="#5f9f3e"/>
<path d="M86 0h7.600v52.600h-7.600z" fill="#93c83d"/>
<path d="M80 0h6v32.500z" fill="#79b443"/>
<path d="M86 32.500L74 52.600h12z" fill="#7dba3c"/>
<path d="M74.500 26.500l11.500 6-10.500 8.500z" fill="#e2f0cc" opacity="0.900"/>
<path d="M0 36L4.500 52.600H0z" fill="#8cbd26"/>
</g>
<text x="34.6" y="420" font-size="4.3" fill="#8cbd26" textLength="40.5" lengthAdjust="spacingAndGlyphs" >Три основні напрями</text>
<text x="34.6" y="424.8" font-size="4.3" fill="#8cbd26" textLength="53" lengthAdjust="spacingAndGlyphs" >діяльності суспільства та</text>
<text x="34.6" y="429.7" font-size="4.3" fill="#8cbd26" textLength="18" lengthAdjust="spacingAndGlyphs" >держави:</text>
<text x="34.6" y="437.5" font-size="5.6" fill="#333333" textLength="34" lengthAdjust="spacingAndGlyphs" >▸запобігання;</text>
<text x="34.6" y="445" font-size="5.6" fill="#333333" textLength="21" lengthAdjust="spacingAndGlyphs" >▸санкції;</text>
<text x="34.6" y="452.3" font-size="5.6" fill="#333333" textLength="46.5" lengthAdjust="spacingAndGlyphs" >▸ Інформування та</text>
<text x="36.6" y="457.7" font-size="5.6" fill="#333333" textLength="27" lengthAdjust="spacingAndGlyphs" >виховання.</text>
<clipPath id="c14"><rect x="0" y="470" width="160" height="36"/></clipPath><g clip-path="url(#c14)">
<text x="15.8" y="486.7" font-size="12.5" fill="#555555" text-anchor="end" >14</text>
<rect x="27.6" y="479.5" width="93.6" height="52.6" fill="#ffffff" />
<g transform="translate(27.6,479.5)">
<path d="M72.500 0H93.600V52.600H70L86 32.500z" fill="#5f9f3e"/>
<path d="M86 0h7.600v52.600h-7.600z" fill="#93c83d"/>
<path d="M80 0h6v32.500z" fill="#79b443"/>
<path d="M86 32.500L74 52.600h12z" fill="#7dba3c"/>
<path d="M74.500 26.500l11.500 6-10.500 8.500z" fill="#e2f0cc" opacity="0.900"/>
<path d="M0 36L4.500 52.600H0z" fill="#8cbd26"/>
</g>
<text x="33.6" y="485.5" font-size="3.4" fill="#8cbd26" textLength="50" lengthAdjust="spacingAndGlyphs" >Таким чином ефективне запобігання</text>
<text x="33.6" y="489.4" font-size="3.4" fill="#8cbd26" textLength="40" lengthAdjust="spacingAndGlyphs" >може робити спеціалізовані</text>
<text x="33.6" y="493.3" font-size="3.4" fill="#8cbd26" textLength="38" lengthAdjust="spacingAndGlyphs" >антикорупційні інституції</text>
<text x="33.6" y="500.0" font-size="4" fill="#333333" textLength="58" lengthAdjust="spacingAndGlyphs" >▸Національне агентство з питань</text>
<text x="36.1" y="505.0" font-size="4" fill="#333333" textLength="52" lengthAdjust="spacingAndGlyphs" >запобігання корупції (НАЗК),</text>
</g>
<defs><filter id="b1" x="-10%" y="-10%" width="120%" height="120%"><feGaussianBlur stdDeviation="1.6"/></filter><filter id="b2" x="-10%" y="-10%" width="120%" height="120%"><feGaussianBlur stdDeviation="0.8"/></filter><clipPath id="v1"><rect x="758" y="56.700" width="74.500" height="99.300"/></clipPath><clipPath id="v2"><rect x="708.500" y="156" width="175" height="98.500"/></clipPath><clipPath id="v3"><rect x="729.500" y="254.500" width="132.300" height="98.500"/></clipPath><clipPath id="v4"><rect x="730.500" y="353" width="131.300" height="98.800"/></clipPath></defs>
<rect x="704" y="55" width="182.500" height="401.500" rx="4" fill="#000" opacity="0.45" filter="url(#b1)"/>
<rect x="704.500" y="54" width="181.500" height="400.500" rx="3.500" fill="#1f1f1f"/>
<rect x="705" y="54.500" width="180.500" height="399.500" rx="3" fill="none" stroke="#3a3a3a" stroke-width="0.800"/>
<g clip-path="url(#v1)"><rect x="757" y="56" width="77" height="101" fill="#8f7a64"/><g filter="url(#b2)"><rect x="758.0" y="57.0" width="4.6" height="4.8" fill="#5a4636"/><rect x="763.6" y="57.0" width="4.6" height="4.8" fill="#d8ccb8"/><rect x="769.2" y="57.0" width="4.6" height="4.8" fill="#d8ccb8"/><rect x="774.8" y="57.0" width="4.6" height="4.8" fill="#5a4636"/><rect x="759.5" y="63.2" width="4.6" height="4.8" fill="#b09a80"/><rect x="765.1" y="63.2" width="4.6" height="4.8" fill="#d8ccb8"/><rect x="770.7" y="63.2" width="4.6" height="4.8" fill="#6e5a48"/><rect x="776.3" y="63.2" width="4.6" height="4.8" fill="#7a6450"/><rect x="758.0" y="69.4" width="4.6" height="4.8" fill="#d8ccb8"/><rect x="763.6" y="69.4" width="4.6" height="4.8" fill="#c9b9a0"/><rect x="769.2" y="69.4" width="4.6" height="4.8" fill="#d8ccb8"/><rect x="774.8" y="69.4" width="4.6" height="4.8" fill="#c9b9a0"/><rect x="759.5" y="75.6" width="4.6" height="4.8" fill="#6e5a48"/><rect x="765.1" y="75.6" width="4.6" height="4.8" fill="#b09a80"/><rect x="770.7" y="75.6" width="4.6" height="4.8" fill="#d8ccb8"/><rect x="776.3" y="75.6" width="4.6" height="4.8" fill="#5a4636"/><rect x="758.0" y="81.8" width="4.6" height="4.8" fill="#5a4636"/><rect x="763.6" y="81.8" width="4.6" height="4.8" fill="#7a6450"/><rect x="769.2" y="81.8" width="4.6" height="4.8" fill="#6e5a48"/><rect x="774.8" y="81.8" width="4.6" height="4.8" fill="#d8ccb8"/><rect x="759.5" y="88.0" width="4.6" height="4.8" fill="#d8ccb8"/><rect x="765.1" y="88.0" width="4.6" height="4.8" fill="#6e5a48"/><rect x="770.7" y="88.0" width="4.6" height="4.8" fill="#6e5a48"/><rect x="776.3" y="88.0" width="4.6" height="4.8" fill="#7a6450"/><rect x="758.0" y="94.2" width="4.6" height="4.8" fill="#5a4636"/><rect x="763.6" y="94.2" width="4.6" height="4.8" fill="#5a4636"/><rect x="769.2" y="94.2" width="4.6" height="4.8" fill="#7a6450"/><rect x="774.8" y="94.2" width="4.6" height="4.8" fill="#5a4636"/><rect x="759.5" y="100.4" width="4.6" height="4.8" fill="#d8ccb8"/><rect x="765.1" y="100.4" width="4.6" height="4.8" fill="#6e5a48"/><rect x="770.7" y="100.4" width="4.6" height="4.8" fill="#7a6450"/><rect x="776.3" y="100.4" width="4.6" height="4.8" fill="#c9b9a0"/><rect x="758.0" y="106.6" width="4.6" height="4.8" fill="#7a6450"/><rect x="763.6" y="106.6" width="4.6" height="4.8" fill="#c9b9a0"/><rect x="769.2" y="106.6" width="4.6" height="4.8" fill="#5a4636"/><rect x="774.8" y="106.6" width="4.6" height="4.8" fill="#d8ccb8"/><rect x="780" y="56" width="9" height="62" fill="#cfa080"/><rect x="788" y="56" width="8" height="62" fill="#b98a6a"/><rect x="796" y="60" width="27" height="60" fill="#d5d1cc"/><rect x="803" y="64" width="2" height="50" fill="#b9b5af"/><rect x="810" y="64" width="2.500" height="44" fill="#bdb9b3"/><rect x="816" y="64" width="2" height="20" fill="#c4c0ba"/><rect x="794" y="56" width="40" height="9.500" fill="#74a82e"/><rect x="800" y="58" width="10" height="5" fill="#4f7f28"/><rect x="818" y="57" width="9" height="6" fill="#5a8c2a"/><path d="M798 63c-2 12-2 22-5 30s-3 12-4 17" fill="none" stroke="#5a8232" stroke-width="3.600" opacity="0.850"/><path d="M834 71c-12-2-19 6-21 20-2 18-5 30-10 42l8 18 23 0z" fill="#3a2018"/><path d="M784 157l-1-22c4-14 10-22 16-26l13-3 10 9 12 3v39z" fill="#e6deda"/><ellipse cx="830" cy="94" rx="10.500" ry="17.500" fill="#c9927c"/><rect x="823" y="107" width="11" height="11" fill="#bf8a74"/><rect x="823" y="89" width="4" height="1.600" fill="#5a342c"/><rect x="826" y="103" width="5" height="1.600" fill="#a05a52"/><path d="M813 104l7 8 5 24-6 10-9-24z" fill="#45241a"/><rect x="817" y="136" width="16" height="11" fill="#3a3030"/><rect x="819" y="139" width="3" height="5" fill="#e6deda"/><rect x="825" y="139" width="3" height="5" fill="#e6deda"/><circle cx="800" cy="124" r="3" fill="#c8342c"/><circle cx="808" cy="150" r="3.500" fill="#c8342c"/><circle cx="792" cy="140" r="2.800" fill="#c0302a"/><circle cx="808" cy="132" r="2" fill="#2a2020"/><circle cx="797" cy="148" r="2" fill="#2a2020"/><circle cx="828" cy="152" r="3" fill="#c8342c"/><circle cx="803" cy="114" r="2" fill="#2a2020"/><path d="M757 124l12 2 15 3-2 28h-25z" fill="#34191a"/><rect x="762" y="138" width="8" height="5" fill="#8a2a20"/><rect x="772" y="146" width="8" height="4" fill="#7a3a2a"/><rect x="767" y="111.500" width="16.500" height="15.500" rx="3" fill="#d6c030"/><ellipse cx="775" cy="119.500" rx="6" ry="3" fill="#2a2040"/></g></g>
<g clip-path="url(#v2)"><rect x="707" y="155" width="178" height="100" fill="#6e4840"/><g filter="url(#b2)"><rect x="706" y="154" width="11" height="102" fill="#5c4a42"/><rect x="716" y="154" width="18" height="102" fill="#886648"/><rect x="733" y="154" width="18.500" height="102" fill="#a08462"/><rect x="733" y="154" width="2" height="102" fill="#b09474"/><rect x="748" y="154" width="3.500" height="102" fill="#7a5c46"/><rect x="706" y="220" width="45" height="36" fill="#5a4030" opacity="0.450"/><rect x="751" y="156" width="51" height="80" fill="#624642"/><g stroke="#a39389" stroke-width="1.100" fill="none"><path d="M751 164.7h51"/><path d="M754.0 164.7v7.300"/><path d="M769.0 164.7v7.300"/><path d="M784.0 164.7v7.300"/><path d="M799.0 164.7v7.300"/><path d="M751 171.6h51"/><path d="M761.5 171.6v7.300"/><path d="M776.5 171.6v7.300"/><path d="M791.5 171.6v7.300"/><path d="M751 178.8h51"/><path d="M754.0 178.8v7.300"/><path d="M769.0 178.8v7.300"/><path d="M784.0 178.8v7.300"/><path d="M799.0 178.8v7.300"/><path d="M751 186.3h51"/><path d="M761.5 186.3v7.300"/><path d="M776.5 186.3v7.300"/><path d="M791.5 186.3v7.300"/><path d="M751 193.5h51"/><path d="M754.0 193.5v7.300"/><path d="M769.0 193.5v7.300"/><path d="M784.0 193.5v7.300"/><path d="M799.0 193.5v7.300"/><path d="M751 201h51"/><path d="M761.5 201v7.300"/><path d="M776.5 201v7.300"/><path d="M791.5 201v7.300"/><path d="M751 208.2h51"/><path d="M754.0 208.2v7.300"/><path d="M769.0 208.2v7.300"/><path d="M784.0 208.2v7.300"/><path d="M799.0 208.2v7.300"/><path d="M751 215.7h51"/><path d="M761.5 215.7v7.300"/><path d="M776.5 215.7v7.300"/><path d="M791.5 215.7v7.300"/><path d="M751 223h51"/><path d="M754.0 223v7.300"/><path d="M769.0 223v7.300"/><path d="M784.0 223v7.300"/><path d="M799.0 223v7.300"/><path d="M751 230.4h51"/><path d="M761.5 230.4v7.300"/><path d="M776.5 230.4v7.300"/><path d="M791.5 230.4v7.300"/></g><rect x="751" y="233" width="40" height="23" fill="#3e322e"/><rect x="802" y="154" width="84" height="17" fill="#b0a898"/><rect x="802" y="168" width="24" height="46" fill="#9c948a"/><rect x="824.500" y="168.500" width="60" height="88" fill="#542a26"/><rect x="823.500" y="168" width="61" height="4.500" fill="#6a3a32"/><rect x="827" y="176" width="28" height="14" fill="#5e2e28"/><rect x="860" y="176" width="20" height="70" fill="#4c2420"/><rect x="831.500" y="196.500" width="24" height="39" fill="#7a7470"/><rect x="835" y="199.500" width="17" height="34" fill="#c0beb8"/><rect x="839" y="202" width="7" height="24" fill="#d6d4ce"/><rect x="857" y="176" width="2" height="78" fill="#3a1a18"/><rect x="875" y="190" width="2.500" height="50" fill="#8a5a50"/><rect x="880" y="172" width="4" height="82" fill="#4a2420"/><path d="M776 256c2-16 8-24 22-27l10 5 12-5c18 2 30 10 37 27z" fill="#3f4f6d"/><path d="M828 233c14 3 24 10 29 23h-16z" fill="#5b6b89"/><path d="M787 230l7-5 7 1 0 5-7 5z" fill="#d0601e"/><path d="M829 229l-6-5-5 1 0 5 6 4z" fill="#d0601e"/><rect x="800" y="222" width="15.500" height="11" fill="#b48272"/><ellipse cx="807.800" cy="208" rx="14.800" ry="20.500" fill="#c29886"/><path d="M791 203c-3-16 5-24.500 17-24.500s20 8 15.500 24.500c-1.500-9-6-12.500-15-12.500s-14.500 4-17.500 12.500z" fill="#2c2826"/><rect x="799" y="203" width="5" height="1.500" fill="#4a3028"/><rect x="811" y="203" width="5" height="1.500" fill="#4a3028"/><rect x="804" y="219" width="7" height="1.400" fill="#9a5a52"/><path d="M808 236v20" stroke="#8a7a70" stroke-width="1"/></g></g>
<g clip-path="url(#v3)"><rect x="728" y="254" width="135" height="100" fill="#6a4c3a"/><g filter="url(#b2)"><rect x="727" y="252" width="137" height="22.500" fill="#c6c6c2"/><ellipse cx="800" cy="262" rx="40" ry="8" fill="#d6d6d2"/><rect x="727" y="252" width="6" height="24" fill="#6a6660"/><ellipse cx="803" cy="258.500" rx="11" ry="2.500" fill="#a8a49c"/><rect x="727" y="270" width="30" height="84" fill="#2e2a26"/><path d="M734.500 266.500l22 3v33l-22-1.500z" fill="#d5d5d5"/><rect x="738" y="322" width="12" height="10" fill="#6a6050"/><rect x="756" y="273.500" width="70" height="11" fill="#a09884"/><rect x="760" y="275" width="8" height="8" fill="#d8d0b8"/><rect x="772" y="276" width="5" height="7" fill="#6a5a44"/><rect x="812" y="274" width="10" height="9" fill="#c8c8c0"/><rect x="756" y="284" width="70" height="46" fill="#8f644a"/><rect x="763" y="303" width="11" height="20" fill="#dadada"/><rect x="826" y="273.500" width="37" height="82" fill="#c9b5a5"/><rect x="841.600" y="278.500" width="18.500" height="13.500" fill="#9a6e50"/><rect x="846" y="281" width="10" height="8" fill="#e2d6c8"/><path d="M826 296c8-4 13 4 13.500 13s-2 16-7 17.500-7.500-8-6.500-30.500z" fill="#2a2624"/><rect x="839.500" y="305" width="2" height="45" fill="#e0d8d0"/><rect x="853" y="312" width="8" height="26" fill="#a87858"/><rect x="838" y="338" width="25" height="16" fill="#b8b0a0"/><rect x="838" y="340" width="9" height="6" fill="#3a3430"/><path d="M750 354c1.500-16 10-28 30-32h26c20 3 28 14 32 32z" fill="#e6e6e6"/><rect x="786" y="316" width="14" height="9" fill="#c09a8a"/><ellipse cx="793" cy="305" rx="13.500" ry="18" fill="#c9a595"/><path d="M775 318c-4-22 2-44.500 18.500-44.500s23 22 17.500 44.500c-1-16-6-27-17.500-28-12 1-17 10-18.500 28z" fill="#3a2a22"/><rect x="784" y="303" width="6" height="1.500" fill="#5a3a30"/><rect x="796" y="303" width="6" height="1.500" fill="#5a3a30"/><rect x="789" y="316" width="8" height="1.300" fill="#a86a60"/></g></g>
<g clip-path="url(#v4)"><rect x="729" y="352" width="134" height="101" fill="#2a1f1b"/><g filter="url(#b2)"><rect x="729" y="352" width="7" height="86" fill="#5a3a30"/><path d="M736 353h39v15l-22 2-17-10z" fill="#9a6058"/><path d="M736 353h39v5h-39z" fill="#b07a70"/><rect x="736" y="368" width="38" height="33" fill="#1e1614"/><path d="M730 453c0-28 10-48 28-54 12 0 20 8 21 22l-3 32z" fill="#27434f"/><path d="M744 410c4 10 4 24 2 40M756 404c4 12 6 28 4 46" stroke="#1c3038" stroke-width="3" fill="none"/><rect x="815" y="350" width="48" height="104" fill="#dcd8d4"/><rect x="842" y="350" width="21" height="104" fill="#d4ccc0"/><rect x="842" y="373" width="20" height="5.500" fill="#6a7880"/><rect x="845" y="399" width="17" height="6" fill="#6a7880"/><rect x="849" y="431" width="13" height="6" fill="#9a9a8a"/><path d="M770 453c0-30 6-46 22-51 24 2 38 14 40 51z" fill="#3a3a3e"/><path d="M774 352h50c2 18-2 38-10 50h-32c-8-12-10-32-8-50z" fill="#c8a090"/><path d="M774 352h10c-2 18 0 36 6 48-10-6-18-26-16-48z" fill="#a07868"/><path d="M774 352h50v4c-16-3-34-3-50 3z" fill="#5a3a30"/><rect x="780" y="366" width="7" height="2" fill="#3a2622"/><rect x="802" y="365" width="7" height="2" fill="#3a2622"/><path d="M783 410c-3-14 2-24 12-34l14-16 8 3c3 16-1 36-11 48 1 14 0 28-3 42h-22c0-14 0-30 2-43z" fill="#d4ac9c"/><rect x="809" y="369" width="3" height="3" fill="#f4f0ee"/><rect x="813" y="375" width="3" height="3" fill="#f4f0ee"/><path d="M778 434h22" stroke="#e8d8c0" stroke-width="1.200"/><path d="M776 398c-8 10-8 26 2 32M816 410c5 14 3 28-14 30" stroke="#d8d8d8" stroke-width="1.100" fill="none"/></g></g>
<path d="M708.500 139H798.5a3 3 0 0 1 3 3V153.8H708.500z" fill="#232326" fill-opacity="0.700"/>
<g fill="none" stroke="#e5453a" stroke-linecap="round"><rect x="715.1999999999999" y="141.6" width="3.200" height="6.200" rx="1.600" fill="#e5453a" stroke="none"/><path d="M713.8 145.7c.2 3.600 5.800 3.600 6 0" stroke-width="1.100"/><path d="M716.8 148.6v2.200M715.0 151.0h3.600" stroke-width="1.100"/><path d="M721.4 141.0l-8.600 10.800" stroke-width="1.700"/></g>
<text x="726.4" y="150.1" font-size="10.4" fill="#dedede" textLength="73.6" lengthAdjust="spacingAndGlyphs" stroke="#dedede" stroke-width="0.22" >Ніколаєва Дар’я</text>
<path d="M708.500 238.5H797.0a3 3 0 0 1 3 3V253.3H708.500z" fill="#232326" fill-opacity="0.700"/>
<g fill="none" stroke="#e5453a" stroke-linecap="round"><rect x="715.1999999999999" y="241.1" width="3.200" height="6.200" rx="1.600" fill="#e5453a" stroke="none"/><path d="M713.8 245.2c.2 3.600 5.800 3.600 6 0" stroke-width="1.100"/><path d="M716.8 248.1v2.200M715.0 250.5h3.600" stroke-width="1.100"/><path d="M721.4 240.5l-8.600 10.800" stroke-width="1.700"/></g>
<text x="726.4" y="249.6" font-size="10.4" fill="#dedede" textLength="69.6" lengthAdjust="spacingAndGlyphs" stroke="#dedede" stroke-width="0.22" >Новіков Богдан</text>
<path d="M708.500 337H782.0a3 3 0 0 1 3 3V351.8H708.500z" fill="#232326" fill-opacity="0.700"/>
<g fill="none" stroke="#e5453a" stroke-linecap="round"><rect x="715.1999999999999" y="339.59999999999997" width="3.200" height="6.200" rx="1.600" fill="#e5453a" stroke="none"/><path d="M713.8 343.7c.2 3.600 5.800 3.600 6 0" stroke-width="1.100"/><path d="M716.8 346.59999999999997v2.200M715.0 349.0h3.600" stroke-width="1.100"/><path d="M721.4 339.0l-8.600 10.800" stroke-width="1.700"/></g>
<text x="726.4" y="348.1" font-size="10.4" fill="#dedede" textLength="56" lengthAdjust="spacingAndGlyphs" stroke="#dedede" stroke-width="0.22" >Анна Капіна</text>
<path d="M708.500 435.5H784.0a3 3 0 0 1 3 3V450.3H708.500z" fill="#232326" fill-opacity="0.700"/>
<g fill="none" stroke="#e5453a" stroke-linecap="round"><rect x="715.1999999999999" y="438.09999999999997" width="3.200" height="6.200" rx="1.600" fill="#e5453a" stroke="none"/><path d="M713.8 442.2c.2 3.600 5.800 3.600 6 0" stroke-width="1.100"/><path d="M716.8 445.09999999999997v2.200M715.0 447.5h3.600" stroke-width="1.100"/><path d="M721.4 437.5l-8.600 10.800" stroke-width="1.700"/></g>
<text x="726.4" y="446.6" font-size="10.4" fill="#dedede" textLength="57.5" lengthAdjust="spacingAndGlyphs" stroke="#dedede" stroke-width="0.22" >valitova alina</text>
<rect x="-6" y="505.3" width="1016" height="18.2" fill="#f3f3f3" />
<rect x="-6" y="523.5" width="1016" height="24" fill="#e4e4e4" />
<rect x="-6" y="523.5" width="118.5" height="24" fill="#ffffff" />
<text x="4" y="518.3" font-size="9.6" fill="#4a4a4a" textLength="52" lengthAdjust="spacingAndGlyphs" stroke="#4a4a4a" stroke-width="0.22" >Слайд 12 з 15</text>
<g fill="none" stroke="#5a5a5a" stroke-width="1"><rect x="66.500" y="508.500" width="8" height="10.500"/><path d="M72 517l5-7.500 1.500 1-5 7.500-2 .800z" fill="#f3f3f3"/></g>
<text x="88" y="518.3" font-size="9.6" fill="#4a4a4a" textLength="40" lengthAdjust="spacingAndGlyphs" stroke="#4a4a4a" stroke-width="0.22" >українська</text>
<circle cx="24.500" cy="514.200" r="12.400" fill="#1d2723"/>
<g fill="none" stroke="#2fd574" stroke-width="1.500" transform="translate(1.5,1.2)"><path d="M17.500 519l1.200-4.200 8-8 3 3-8 8z"/><path d="M25 508.500l3 3"/></g>
<g stroke="#6a6a6a" stroke-width="1" fill="none"><path d="M651 514.500h8M651 516.800h8M651 519h8M655 509.500v3M653.500 511l1.500-1.500 1.500 1.500"/></g>
<text x="662.8" y="518.2" font-size="9.4" fill="#4a4a4a" textLength="30.5" lengthAdjust="spacingAndGlyphs" stroke="#4a4a4a" stroke-width="0.22" >Нотатки</text>
<path d="M705 508.500h11v7.500h-6l-2.800 2.800v-2.800h-2.200z" fill="#4a4a4a"/>
<text x="718" y="518.2" font-size="9.4" fill="#4a4a4a" textLength="35.5" lengthAdjust="spacingAndGlyphs" stroke="#4a4a4a" stroke-width="0.22" >Примітки</text>
<rect x="766" y="506" width="23" height="16.5" fill="#c9c9c9" />
<g fill="none" stroke="#6a6a6a" stroke-width="1"><rect x="772.500" y="509.500" width="10.500" height="9.500"/><path d="M776 509.500v9.500M772.500 512.500h3.500M772.500 515.500h3.500"/></g>
<g fill="none" stroke="#6a6a6a" stroke-width="1"><rect x="795.500" y="509.500" width="4" height="3.800"/><rect x="801.500" y="509.500" width="4" height="3.800"/><rect x="795.500" y="515.200" width="4" height="3.800"/><rect x="801.500" y="515.200" width="4" height="3.800"/></g>
<g fill="none" stroke="#6a6a6a" stroke-width="1"><path d="M824 510.500c-2-1.200-3.500-1.200-5 0v8c1.500-1.200 3-1.200 5 0 2-1.200 3.500-1.200 5 0v-8c-1.500-1.200-3-1.200-5 0zM824 510.500v8"/></g>
<g fill="none" stroke="#6a6a6a" stroke-width="1"><path d="M842 509h11M843 509.500v6h9v-6M847.500 515.500v2.500M845 520h5"/></g>
<rect x="862.5" y="514.2" width="5" height="1.2" fill="#555" />
<rect x="871" y="514.4" width="77.5" height="1" fill="#9a9a9a" />
<rect x="909.5" y="512.5" width="1" height="5" fill="#9a9a9a" />
<rect x="896" y="509.5" width="3.8" height="10.5" fill="#5a5a5a" />
<rect x="952.5" y="514.2" width="6" height="1.2" fill="#555" />
<rect x="954.9" y="511.8" width="1.2" height="6" fill="#555" />
<text x="964.8" y="518.2" font-size="9.4" fill="#4a4a4a" textLength="16.5" lengthAdjust="spacingAndGlyphs" stroke="#4a4a4a" stroke-width="0.22" >69%</text>
<g fill="none" stroke="#6a6a6a" stroke-width="1"><rect x="990.500" y="509.500" width="9" height="9" stroke-dasharray="2.500 1.500"/><path d="M993 514.500h4M995 512.500v4"/></g>
</g>
</svg>
</body></html>
